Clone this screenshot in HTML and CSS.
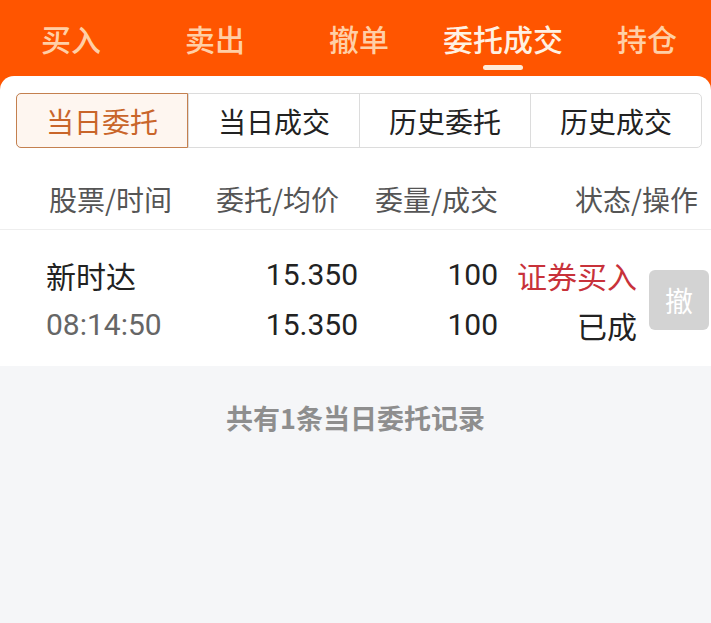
FILE: index.html
```html
<!DOCTYPE html>
<html lang="zh-CN">
<head>
<meta charset="utf-8">
<title>委托成交</title>
<link rel="stylesheet" href="styles.css">
</head>
<body>
<div class="page">
  <header class="top">
    <nav class="nav">
      <div class="nav-item">买入</div>
      <div class="nav-item">卖出</div>
      <div class="nav-item">撤单</div>
      <div class="nav-item active">委托成交<span class="bar"></span></div>
      <div class="nav-item">持仓</div>
    </nav>
  </header>
  <main class="card">
    <div class="seg">
      <div class="seg-item on">当日委托</div>
      <div class="seg-item">当日成交</div>
      <div class="seg-item">历史委托</div>
      <div class="seg-item">历史成交</div>
    </div>
    <div class="thead">
      <div class="th th1">股票/时间</div>
      <div class="th th2">委托/均价</div>
      <div class="th th3">委量/成交</div>
      <div class="th th4">状态/操作</div>
    </div>
    <div class="trow">
      <div class="cell c1">
        <div class="name">新时达</div>
        <div class="time">08:14:50</div>
      </div>
      <div class="cell c2">
        <div class="num">15.350</div>
        <div class="num">15.350</div>
      </div>
      <div class="cell c3">
        <div class="num">100</div>
        <div class="num">100</div>
      </div>
      <div class="cell c4">
        <div class="buy">证券买入</div>
        <div class="done">已成</div>
      </div>
      <div class="cancel">撤</div>
    </div>
  </main>
  <div class="summary">共有1条当日委托记录</div>
</div>
</body>
</html>
```

FILE: styles.css
```css
html, body {
  margin: 0;
  padding: 0;
}
body {
  background: #F5F6F8;
  font-family: "Noto Sans CJK SC", "Noto Sans", sans-serif;
  overflow: hidden;
}
.page {
  width: 711px;
  height: 623px;
  background: #F5F6F8;
}
.top {
  background: #FF5500;
  height: 90px;
  overflow: hidden;
}
.nav {
  display: grid;
  grid-template-columns: repeat(5, 144px);
  margin-left: -1px;
  padding-top: 17px;
}
.nav-item {
  display: flex;
  flex-direction: column;
  align-items: center;
  font-size: 30px;
  line-height: 42px;
  font-weight: 500;
  color: #FFCFA6;
}
.nav-item.active {
  color: #FFF1E3;
}
.bar {
  display: block;
  width: 40px;
  height: 5px;
  margin-top: 6px;
  border-radius: 3px;
  background: #FFEBD8;
}
.card {
  margin-top: -14px;
  background: #FFFFFF;
  border-radius: 14px 14px 0 0;
  padding-top: 17px;
}
.seg {
  display: grid;
  grid-template-columns: repeat(4, 1fr);
  margin: 0 9px 0 16px;
  height: 55px;
  border: 1px solid #DCDCDC;
  border-radius: 5px;
  box-sizing: border-box;
}
.seg-item {
  display: flex;
  align-items: center;
  justify-content: center;
  font-size: 28px;
  color: #222222;
  border-left: 1px solid #DCDCDC;
}
.seg-item:first-child {
  border-left: none;
}
.seg-item.on {
  margin: -1px 0 -1px -1px;
  border: 1px solid #C4804F;
  border-radius: 5px 0 0 5px;
  background: #FEF6F0;
  color: #C9652A;
}
.thead {
  display: grid;
  grid-template-columns: 131px 159px 159px 200px;
  padding: 31px 0 10px 49px;
  line-height: 40px;
  font-size: 28px;
  color: #555555;
  border-bottom: 1px solid #EEEEEE;
}
.th2, .th3, .th4 {
  text-align: right;
}
.trow {
  display: grid;
  grid-template-columns: 154px 158px 140px 139px 72px;
  align-items: center;
  padding: 20px 0 16px 46px;
  font-size: 30px;
  line-height: 50px;
  color: #222222;
}
.c2, .c3, .c4 {
  text-align: right;
}
.num, .time {
  font-family: Roboto, "Noto Sans CJK SC", sans-serif;
}
.time {
  color: #666666;
}
.buy {
  color: #C8323A;
}
.cancel {
  margin-left: 12px;
  width: 60px;
  height: 60px;
  display: flex;
  align-items: center;
  justify-content: center;
  background: #D3D3D3;
  color: #FFFFFF;
  border-radius: 6px;
  font-size: 28px;
  line-height: 1;
}
.summary {
  margin-top: 32px;
  text-align: center;
  font-size: 27px;
  line-height: 40px;
  font-weight: 700;
  color: #8E8E8E;
}
```
